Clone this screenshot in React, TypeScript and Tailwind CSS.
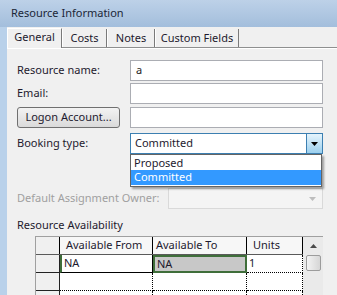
import React from 'react';

const tabs = ['General', 'Costs', 'Notes', 'Custom Fields'];
const tabWidths = ['w-[55px]', 'w-[45px]', 'w-[48px]', 'w-[84px]'];

function TextBox({ value }: { value?: string }) {
  return (
    <div className="h-[21px] w-[193px] border border-[#abadb3] bg-white pl-[5px] flex items-center text-[#1e1e1e]">
      {value}
    </div>
  );
}

function Grid() {
  const rows = [
    { from: 'NA', to: 'NA', units: '1' },
    { from: '', to: '', units: '' },
    { from: '', to: '', units: '' },
  ];
  return (
    <div className="ml-[18px] mt-[3px] w-[288px] flex border-t border-l border-[#a0a0a0] bg-white">
      <div className="flex-1 flex flex-col">
        <div className="h-[18px] flex bg-[#f7f7f7] border-b border-[#5a5a5a]">
          <div className="w-[24px] border-r border-black bg-[#f0f0f0]" />
          <div className="w-[93px] border-r border-black pl-[6px] flex items-center">Available From</div>
          <div className="w-[94px] border-r border-black pl-[3px] flex items-center">Available To</div>
          <div className="w-[56px] border-r border-black pl-[6px] flex items-center">Units</div>
        </div>
        {rows.map((r, i) => (
          <div key={i} className="h-[18px] flex">
            <div className="w-[24px] bg-[#f0f0f0] border-r border-b border-[#222]" />
            <div
              className={`w-[93px] border-r border-b border-dotted border-black pl-[2px] flex items-center ${
                i === 0 ? 'border-l-2 border-l-[#3f6e3a] border-solid pl-[1px]' : ''
              }`}
            >
              {r.from}
            </div>
            <div
              className={`w-[94px] pl-[2px] flex items-center ${
                i === 0
                  ? 'border-2 border-[#3f6e3a] bg-[#c8c8c8]'
                  : 'border-r border-b border-dotted border-black'
              }`}
            >
              {r.to}
            </div>
            <div className="w-[56px] border-r border-b border-dotted border-black pl-[2px] flex items-center">
              {r.units}
            </div>
          </div>
        ))}
      </div>
      <div className="w-[20px] bg-[#eaeaea] flex flex-col items-center">
        <div className="h-[18px] flex items-center justify-center">
          <svg width="7" height="4" viewBox="0 0 7 4">
            <path d="M3.5 0 L7 4 L0 4 Z" fill="#4a4a4a" />
          </svg>
        </div>
        <div className="w-[15px] h-[16px] rounded-[2px] border border-[#9c9c9c] bg-gradient-to-r from-[#f3f3f3] to-[#d6d6d6]" />
      </div>
    </div>
  );
}

export default function App() {
  return (
    <div className="w-[337px] h-[295px] overflow-hidden bg-[#b9d1ea] font-['Noto_Sans',sans-serif] text-[11px] text-[#1e1a2e] flex flex-col">
      <div className="h-[27px] shrink-0 bg-gradient-to-b from-[#bdd1e8] to-[#a3bedc] flex items-center pl-[11px] text-[11px] text-[#1b2637]">
        Resource Information
      </div>
      <div className="flex-1 ml-[7px] bg-[#f0f0f0] flex flex-col relative">
        {/* tab strip */}
        <div className="h-[21px] shrink-0 flex items-end border-b border-[#8e8f8f]">
          {tabs.map((t, i) => (
            <div
              key={t}
              className={`${tabWidths[i]} flex items-center justify-center border-r border-[#7a7a7a] ${
                i === 0
                  ? 'h-[20px] border-l border-l-white border-t border-t-white -mb-px bg-[#f0f0f0] pb-[2px]'
                  : 'h-[18px] border-l border-l-white'
              }`}
            >
              {t}
            </div>
          ))}
        </div>
        <div className="flex-1 border-t border-white pl-[10px] pt-[11px] flex flex-col">
          <div className="flex items-center">
            <div className="w-[113px]">Resource name:</div>
            <TextBox value="a" />
          </div>
          <div className="flex items-center mt-[2px]">
            <div className="w-[113px]">Email:</div>
            <TextBox />
          </div>
          <div className="flex items-center mt-[3px]">
            <div className="w-[113px]">
              <button className="w-[103px] h-[21px] rounded-[3px] border border-[#707070] bg-gradient-to-b from-[#f3f3f3] to-[#dadada] text-[#1e1a2e] text-center">
                Logon Account...
              </button>
            </div>
            <TextBox />
          </div>
          <div className="flex items-center mt-[5px] relative">
            <div className="w-[113px]">Booking type:</div>
            <div className="h-[21px] w-[193px] border border-[#3c7fb1] bg-white flex items-center pl-[4px]">
              <span className="flex-1">Committed</span>
              <div className="w-[16px] h-[19px] border-l border-[#3c7fb1] bg-gradient-to-b from-[#e5f4fc] to-[#9cd0ee] flex items-center justify-center">
                <svg width="7" height="4" viewBox="0 0 7 4">
                  <path d="M0 0 L7 0 L3.5 4 Z" fill="#000" />
                </svg>
              </div>
            </div>
            <div className="absolute left-[113px] top-[21px] w-[192px] border border-[#646464] bg-white shadow-[2px_2px_2px_rgba(0,0,0,0.35)] py-[1px] z-10">
              <div className="h-[14px] pl-[3px] flex items-center">Proposed</div>
              <div className="h-[15px] pl-[3px] flex items-center bg-[#3399ff] text-white">Committed</div>
            </div>
          </div>
          <div className="flex items-center mt-[34px]">
            <div className="w-[151px] text-[#a0a0a0]">Default Assignment Owner:</div>
            <div className="h-[21px] w-[155px] border border-[#d9d9d9] bg-[#f4f4f4] flex items-center justify-end pr-[6px]">
              <svg width="7" height="4" viewBox="0 0 7 4">
                <path d="M0 0 L7 0 L3.5 4 Z" fill="#bdbdbd" />
              </svg>
            </div>
          </div>
          <div className="mt-[8px] h-[16px] flex items-center">Resource Availability</div>
          <Grid />
        </div>
      </div>
    </div>
  );
}
